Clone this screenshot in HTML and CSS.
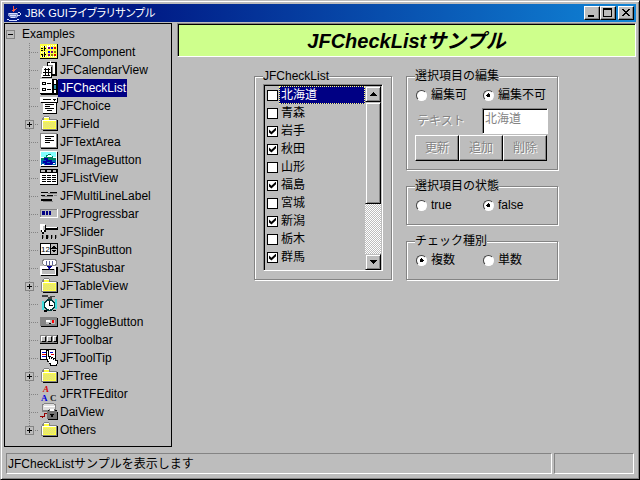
FILE: index.html
```
<!DOCTYPE html>
<html lang="ja">
<head>
  <meta charset="UTF-8" />
  <meta name="viewport" content="width=device-width, initial-scale=1" />
  <title>JBK GUIライブラリサンプル</title>
  <link rel="stylesheet" href="styles.css">
</head>
<body>
<svg class="sprite" aria-hidden="true">
  <symbol id="folder" viewBox="0 0 18 18">
    <path d="M3 16h15V5h-1v10H3z" fill="#000"/>
    <path d="M1 5h1V3h1V2h1V1h5v1h1v2h7v11H1z" fill="#848484"/>
    <path d="M2 5h2V3h5v2h7v9H2z" fill="#ffff42"/>
    <path d="M2 5.500h14M2.500 5v9M4 2.500h5" fill="none" stroke="#fff"/>
    <path d="M4 7.500h12M4 9.500h12M4 11.500h12" stroke="#d6d694" stroke-dasharray="1 1"/>
    <path d="M3 8.500h12M3 10.500h12M3 12.500h12" stroke="#d6d694" stroke-dasharray="1 1"/>
  </symbol>
</svg>
<div class="window">
  <header class="titlebar">
    <svg class="java" viewBox="0 0 16 16" aria-hidden="true">
      <path d="M7 7C4 5 9 4 7 0c4 3-1 4 1 7M9 7c-2-2 2-2 2-4-3 1-4 2-2 4" fill="#f75a42"/>
      <path d="M2 8h10v1c0 3-1 4-3 4H5c-2 0-3-2-3-5z" fill="#8494ce"/>
      <path d="M3 8h8M4 10h6M5 12h4M1 14c3 2 9 2 12 0M12 8c4-1 3 3-1 3" fill="none" stroke="#d6deff"/>
    </svg>
    <h1>JBK GUIライブラリサンプル</h1>
    <div class="controls">
      <button type="button" aria-label="最小化"><svg viewBox="0 0 12 10"><path d="M2 8h6" stroke="#000" stroke-width="2"/></svg></button>
      <button type="button" aria-label="最大化"><svg viewBox="0 0 12 10"><path d="M1.500 1v7.500h8V1M1 1h9" fill="none" stroke="#000"/><path d="M1 1h9" stroke="#000" stroke-width="2"/></svg></button>
      <button type="button" class="close" aria-label="閉じる"><svg viewBox="0 0 12 10"><path d="M2 1h2v1h1v1h2V2h1V1h2v1H9v1H8v1H7v1h1v1h1v1h1v1H8V7H7V6H5v1H4v1H2V7h1V6h1V5h1V4H4V3H3V2H2z"/></svg></button>
    </div>
  </header>

  <div class="workspace">
    <nav class="tree" aria-label="Examples">
      <div class="root"><button type="button" class="toggle" aria-label="折りたたむ"></button><a href="#">Examples</a></div>
      <ul>
        <li><span class="joint"></span><svg viewBox="0 0 18 18"><path d="M0 1h18v15H0z"/><path d="M0 1h17v14H0z" fill="#ffff42"/><path d="M1 3.500h5M1 9.500h5M1 13.500h5M7 2.500h10M7 13.500h10" stroke="#fff" stroke-dasharray="1 1"/><path d="M1 5.500h5M1 7.500h4M1 11.500h5M4.500 3v11M2.500 12v2" stroke="#000" stroke-dasharray="2 1"/><path d="M7 3h3v3H7z" fill="#fff"/><path d="M8 4h2v2H8zM11 8h2v2h-2zM8 11h2v2H8z" fill="#7b0084"/><path d="M11 4h2v2h-2zM8 8h2v2H8z" fill="#0000ff"/><path d="M14 4h2v2h-2zM14 11h2v2h-2z" fill="#e70000"/><path d="M14 8h2v2h-2zM11 11h2v2h-2z" fill="#848400"/></svg><a href="#">JFComponent</a></li>
        <li><span class="joint"></span><svg viewBox="0 0 18 18"><path d="M7 1h10v14H7z"/><path d="M10 0h1v3h-1z" fill="#fff"/><path d="M8 3h7v10H8z" fill="#848484"/><path d="M8 2h7v2H8zM13 4h2v9h-2z" fill="#fff"/><path d="M3 6h9v11H2z"/><path d="M3 5h8v11H1l1-6z" fill="#fff"/><path d="M4 8.500h6M3 11.500h8M3 14.500h7M5.500 7v8M8.500 7v8" stroke="#000"/></svg><a href="#">JFCalendarView</a></li>
        <li class="selected"><span class="joint"></span><svg viewBox="0 0 18 18"><path d="M1 1h17v15H1z"/><path d="M0 0h17v15H0z"/><path d="M0 0h12v14H0z" fill="#fff"/><path d="M2.500 3.500h3v2h-3zM2.500 9.500h3v2h-3z" fill="none" stroke="#000"/><path d="M7 4.500h4M7 10.500h4" stroke="#000"/><path d="M14 1h2v4h-2zM14 11h2v3h-2z" fill="#fff"/><path d="M14 6h2v4h-2z" fill="#3194a5"/></svg><a href="#">JFCheckList</a></li>
        <li><span class="joint"></span><svg viewBox="0 0 18 18"><path d="M1 1h17v5h-1v11H3V6H1z"/><path d="M0 0h17v5H0zM3 6h13v10H3z" fill="#fff"/><path d="M3 2.500h8M5 7.500h9M5 9.500h5M5 11.500h9M7 13.500h5M13 2.500h3M14 3.500h1" stroke="#000"/></svg><a href="#">JFChoice</a></li>
        <li><span class="joint"><button type="button" class="toggle" aria-label="展開"></button></span><svg><use href="#folder"/></svg><a href="#">JFField</a></li>
        <li><span class="joint"></span><svg viewBox="0 0 18 18"><path d="M1 1h17v15H1z"/><path d="M0 0h17v15H0z" fill="#848484"/><path d="M1 1h15v13H1z" fill="#fff"/><path d="M5 3.500h9M5 5.500h6M5 7.500h9M5 9.500h5" stroke="#000"/></svg><a href="#">JFTextArea</a></li>
        <li><span class="joint"></span><svg viewBox="0 0 18 18"><path d="M1 1h17v15H1z"/><path d="M0 0h17v15H0z" fill="#fff"/><path d="M1 1h15v5H1z" fill="#84ffff"/><path d="M1 7h3V6h2V4h2V3h3v2h2v2h3v3H1z" fill="#008463"/><path d="M1 9h15v5H1z" fill="#006bb5"/><path d="M4 8h3v2h4v2h4M3 11h3v2h6" stroke="#0000a5" stroke-width="2" fill="none"/><path d="M8 4h3v1h1v1H7V5h1zM2 13h2v1H2zM13 12h2v1h-2z" fill="#fff"/></svg><a href="#">JFImageButton</a></li>
        <li><span class="joint"></span><svg viewBox="0 0 18 18"><path d="M0 0h18v16H0z"/><path d="M1 1h4v2H1zM7 1h4v2H7zM13 1h3v2h-3z" fill="#bdbdbd"/><path d="M0 4h17v11H0z" fill="#fff"/><path d="M2 6.500h14M2 8.500h14M2 10.500h14M2 12.500h14" stroke="#000" stroke-dasharray="4 1"/></svg><a href="#">JFListView</a></li>
        <li><span class="joint"></span><svg viewBox="0 0 18 18"><path d="M1 5h7v1H1zM10 5h7v1h-7zM1 8h4v1H1zM7 8h6v1H7zM1 12h11v2H1z"/><path d="M8 6h9v1H8zM2 9h11v1H2zM14 8h3v1h-3zM3 14h10v1H3z" fill="#848484"/></svg><a href="#">JFMultiLineLabel</a></li>
        <li><span class="joint"></span><svg viewBox="0 0 18 18"><path d="M0 4h18v9H0z" fill="#fff"/><path d="M0 4h17v8H0z" fill="#848484"/><path d="M1 5h16v7H1z" fill="#bdbdbd"/><path d="M2 6h3v4H2zM6 6h2v4H6zM9 6h2v4H9z" fill="#000084"/></svg><a href="#">JFProgressbar</a></li>
        <li><span class="joint"></span><svg viewBox="0 0 18 18"><path d="M6 4h12v3H6z"/><path d="M6 4h11v1H6z" fill="#fff"/><path d="M1 2h5v7H4v2H2V9H1z"/><path d="M0 1h5v6H4v2H2V7H0z" fill="#fff"/><path d="M3 3h2v4H3z" fill="#bdbdbd"/><path d="M2 12h1v4H2zM6 12h2v4H6zM11 12h1v4h-1zM15 12h1v4h-1z"/><path d="M3 12h1v3H3zM8 12h1v3H8zM12 12h1v3h-1zM16 12h1v3h-1z" fill="#848484"/></svg><a href="#">JFSlider</a></li>
        <li><span class="joint"></span><svg viewBox="0 0 18 18"><path d="M0 2h18v12H0z"/><path d="M1 3h9v10H1z" fill="#fff"/><path d="M11 3h6v4h-6zM11 8h6v5h-6z" fill="#bdbdbd"/><path d="M12 6h4v1h-4zM13 5h2v1h-2zM12 9h4v1h-4zM13 10h2v1h-2z"/><text x="1" y="11" font-size="8">12</text></svg><a href="#">JFSpinButton</a></li>
        <li><span class="joint"></span><svg viewBox="0 0 18 18"><path d="M1 8h17v9H1z"/><path d="M0 7h16v9H0z" fill="#fff"/><path d="M2 10h13v5H2z" fill="#bdbdbd"/><path d="M2 10h12v1H2z"/><path d="M3 0h12l2 2v3l-2 2h-3l-3 4-2-4H4L2 5V2z" fill="#848484"/><path d="M4 1h10l2 2v1l-2 2H4L3 5V2z" fill="#fff"/><path d="M6.500 2v4M9.500 2v4M12.500 2v4" stroke="#5a6394"/><path d="M7 7h5v1h-1v1h-1v2H9V9H8V8H7z" fill="#000094"/></svg><a href="#">JFStatusbar</a></li>
        <li><span class="joint"><button type="button" class="toggle" aria-label="展開"></button></span><svg><use href="#folder"/></svg><a href="#">JFTableView</a></li>
        <li><span class="joint"></span><svg viewBox="0 0 18 18"><path d="M2 0h6v2h2V1h5v1h-3v2H8V2H2z" fill="#424242"/><path d="M2 6h2v9H2zM15 4h2v10h-2z" fill="#42dede"/><circle cx="9.500" cy="10" r="6" fill="#003939"/><circle cx="9.500" cy="10" r="4.500" fill="#fff"/><path d="M9 6h1v4h3v1H9zM4 15h3v2H4zM13 15h3v1h-3z"/></svg><a href="#">JFTimer</a></li>
        <li><span class="joint"></span><svg viewBox="0 0 18 18"><path d="M1 5h17v9H1z"/><path d="M0 4h17v9H0z" fill="#848484"/><path d="M6 7h9v4H6z" fill="#bdbdbd"/><path d="M6 7h4v2H6z" fill="#fff"/><path d="M12 7h2v3h-2z" fill="#ff0000"/><path d="M9 10h2v1H9z"/></svg><a href="#">JFToggleButton</a></li>
        <li><span class="joint"></span><svg viewBox="0 0 18 18"><path d="M0 4h18v9H0z"/><path d="M0 4h17v8H0z" fill="#848484"/><path d="M1 5h4v5H1zM7 5h4v5H7zM13 5h3v5h-3z" fill="#fff"/><path d="M2 6h4v5H2zM8 6h4v5H8zM14 6h3v5h-3z"/><path d="M2 6h3v4H2zM8 6h3v4H8zM14 6h2v4h-2z" fill="#bdbdbd"/></svg><a href="#">JFToolbar</a></li>
        <li><span class="joint"></span><svg viewBox="0 0 18 18"><path d="M0 0h16v11H0z"/><path d="M1 1h14v9H1z" fill="#fff"/><path d="M2 3.500h4M10 3.500h3M2 7.500h4" stroke="#0000c6"/><path d="M2 5.500h4M11 5.500h3" stroke="#e70000"/><path d="M6 1h3v6h2v1h2v1h3v2h2v4h-1v2h-7v-2H9v-2H7v-2H6z"/><path d="M7 2h1v6h1v2h1V8h1v2h1V9h1v2h1v-1h1v2h2v3h-1v1h-5v-2h-2v-2H8v-2H7z" fill="#fff"/></svg><a href="#">JFToolTip</a></li>
        <li><span class="joint"><button type="button" class="toggle" aria-label="展開"></button></span><svg><use href="#folder"/></svg><a href="#">JFTree</a></li>
        <li><span class="joint"></span><svg class="letters" viewBox="0 0 18 18"><text x="3" y="7" fill="#d60000" font-style="italic">A</text><text x="1" y="16" fill="#0000de">A</text><text x="10" y="16" fill="#212121">C</text></svg><a href="#">JFRTFEditor</a></li>
        <li><span class="joint"></span><svg viewBox="0 0 18 18"><path d="M2 1h2V0h10v1h2v8H2z" fill="#848484"/><path d="M4 1h10v1h1v5H3V2h1z" fill="#dedede"/><path d="M4 3.500h11" stroke="#fff"/><path d="M8 7h9v2h1v8H8z"/><path d="M7 8h2V6h6v2h2v8H7z" fill="#737373"/><path d="M10 6h4v2h-4z" fill="#fff"/><path d="M10 11h4v1h-1v2h-2v-2h-1z"/><path d="M0 13h4v-3h3v1H5v3H3v1H2v-1H0z" fill="#940000"/></svg><a href="#">DaiView</a></li>
        <li><span class="joint"><button type="button" class="toggle" aria-label="展開"></button></span><svg><use href="#folder"/></svg><a href="#">Others</a></li>
      </ul>
    </nav>

    <main>
      <h2 class="banner">JFCheckListサンプル</h2>
      <div class="demo">
        <fieldset class="group">
          <legend>JFCheckList</legend>
          <div class="listbox">
            <ul class="items">
              <li class="selected"><input type="checkbox" id="p1"><label for="p1">北海道</label></li>
              <li><input type="checkbox" id="p2"><label for="p2">青森</label></li>
              <li><input type="checkbox" id="p3" checked><label for="p3">岩手</label></li>
              <li><input type="checkbox" id="p4" checked><label for="p4">秋田</label></li>
              <li><input type="checkbox" id="p5"><label for="p5">山形</label></li>
              <li><input type="checkbox" id="p6" checked><label for="p6">福島</label></li>
              <li><input type="checkbox" id="p7"><label for="p7">宮城</label></li>
              <li><input type="checkbox" id="p8" checked><label for="p8">新潟</label></li>
              <li><input type="checkbox" id="p9"><label for="p9">栃木</label></li>
              <li><input type="checkbox" id="p10" checked><label for="p10">群馬</label></li>
            </ul>
            <div class="scrollbar">
              <button type="button" aria-label="上へ"><svg viewBox="0 0 7 4"><path d="M3 0h1v1h1v1h1v1h1v1H0V3h1V2h1V1h1z"/></svg></button>
              <div class="thumb"></div>
              <div class="track"></div>
              <button type="button" aria-label="下へ"><svg viewBox="0 0 7 4"><path d="M0 0h7v1H6v1H5v1H4v1H3V3H2V2H1V1H0z"/></svg></button>
            </div>
          </div>
        </fieldset>

        <div class="options">
          <fieldset class="group">
            <legend>選択項目の編集</legend>
            <div class="pair">
              <label><input type="radio" name="edit">編集可</label>
              <label><input type="radio" name="edit" checked>編集不可</label>
            </div>
            <div class="pair field">
              <label class="disabled" for="item-text">テキスト</label>
              <input type="text" id="item-text" value="北海道" disabled>
            </div>
            <div class="buttons">
              <button type="button" disabled>更新</button>
              <button type="button" disabled>追加</button>
              <button type="button" disabled>削除</button>
            </div>
          </fieldset>
          <fieldset class="group">
            <legend>選択項目の状態</legend>
            <div class="pair">
              <label><input type="radio" name="state">true</label>
              <label><input type="radio" name="state" checked>false</label>
            </div>
          </fieldset>
          <fieldset class="group">
            <legend>チェック種別</legend>
            <div class="pair">
              <label><input type="radio" name="kind" checked>複数</label>
              <label><input type="radio" name="kind">単数</label>
            </div>
          </fieldset>
        </div>
      </div>
    </main>
  </div>

  <footer class="statusbar">
    <p>JFCheckListサンプルを表示します</p>
    <p class="side"></p>
  </footer>
</div>
</body>
</html>
```
FILE: styles.css
```
* {
  box-sizing: border-box;
}
body {
  margin: 0;
  font-family: "Liberation Sans", "Noto Sans CJK JP", sans-serif;
  font-size: 12px;
  line-height: 18px;
  color: #000;
  background: #bdbdbd;
}
button, input {
  font: inherit;
  margin: 0;
  padding: 0;
  border-radius: 0;
}
ul {
  list-style: none;
  margin: 0;
  padding: 0;
}
svg {
  shape-rendering: crispEdges;
}
.sprite {
  display: none;
}
.window {
  display: flex;
  flex-direction: column;
  min-height: 100vh;
  padding: 2px;
  border: 1px solid;
  border-color: #bdbdbd #000 #000 #bdbdbd;
  box-shadow: inset 1px 1px 0 #fff, inset -1px -1px 0 #848484;
}

/* title bar */
.titlebar {
  display: flex;
  align-items: center;
  height: 18px;
  margin: 1px 1px 1px;
  padding: 0 2px;
  gap: 3px;
  color: #fff;
  background: linear-gradient(90deg, #001884 20%, #1084d6);
}
.java {
  width: 16px;
  height: 16px;
}
.titlebar h1 {
  flex: 1;
  margin: 0;
  font-size: 11px;
  font-weight: normal;
  font-feature-settings: "palt";
}
.controls {
  display: flex;
}
.controls button {
  width: 16px;
  height: 14px;
  display: flex;
  background: #bdbdbd;
  border: 1px solid;
  border-color: #fff #000 #000 #fff;
  box-shadow: inset -1px -1px 0 #848484;
}
.controls svg {
  width: 12px;
  height: 10px;
  margin: 1px;
}
.controls .close {
  margin-left: 2px;
}

/* tree */
.workspace {
  flex: 1;
  display: flex;
  gap: 5px;
  padding: 0 1px;
}
.tree {
  flex: 0 0 168px;
  padding: 1px;
  border: 1px solid #000;
}
.tree a {
  color: #000;
  text-decoration: none;
  padding: 0 1px 0 2px;
}
.root {
  display: flex;
  align-items: center;
  height: 18px;
  gap: 5px;
}
.toggle {
  width: 9px;
  height: 9px;
  display: block;
  border: 1px solid #848484;
  background: linear-gradient(#000, #000) center / 5px 1px no-repeat #bdbdbd;
}
li .toggle {
  background: linear-gradient(#000, #000) center / 5px 1px no-repeat,
    linear-gradient(#000, #000) center / 1px 5px no-repeat #bdbdbd;
}
.tree ul {
  padding-left: 19px;
}
.tree li {
  display: flex;
  align-items: center;
  height: 18px;
}
.joint {
  flex: 0 0 15px;
  height: 18px;
  display: flex;
  align-items: center;
  background:
    repeating-linear-gradient(#848484 0 1px, transparent 1px 2px) 4px 0 / 1px 100% no-repeat,
    repeating-linear-gradient(90deg, #848484 0 1px, transparent 1px 2px) 4px 9px / 10px 1px no-repeat;
}
.tree li:last-child .joint {
  background-size: 1px 9px, 10px 1px;
}
.tree li svg {
  flex: none;
  width: 18px;
  height: 18px;
}
.letters text {
  font-family: "Liberation Serif", serif;
  font-size: 9px;
  font-weight: bold;
}
.tree .selected a {
  color: #fff;
  background: #000084;
}

/* content */
main {
  flex: 1;
}
.banner {
  margin: 0;
  height: 34px;
  font-size: 20px;
  line-height: 34px;
  font-style: italic;
  text-align: center;
  background: #ceff8c;
  border: 1px solid;
  border-color: #848484 #fff #fff #848484;
  box-shadow: inset 1px 1px 0 #000;
}
.demo {
  display: flex;
  justify-content: center;
  gap: 14px;
  padding: 12px 1px 0 0;
}
.group {
  min-width: 0;
  margin: 0;
  padding: 1px 8px 8px;
  border: 1px solid #848484;
  box-shadow: 1px 1px 0 #fff, inset 1px 1px 0 #fff;
}
.group legend {
  padding: 0;
  line-height: 14px;
  background: #bdbdbd;
}
.listbox {
  display: flex;
  width: 120px;
  height: 187px;
  border: 1px solid;
  border-color: #848484 #fff #fff #848484;
  box-shadow: inset 1px 1px 0 #000;
  padding: 1px 1px 0 1px;
}
.items {
  flex: 1;
}
.items li {
  display: flex;
  align-items: center;
  gap: 1px;
  padding-left: 2px;
}
.items label {
  flex: 1;
  height: 18px;
  line-height: 16px;
  padding-left: 1px;
  border: 1px solid transparent;
}
.items .selected label {
  color: #fff;
  background: #000084;
  border: 1px dotted #ffff7b;
}
input[type="checkbox"] {
  appearance: none;
  width: 11px;
  height: 11px;
  background: #fff;
  border: 1px solid #000;
}
input[type="checkbox"]:checked::before {
  content: "";
  display: block;
  width: 7px;
  height: 7px;
  margin: 1px;
  background: #000;
  clip-path: polygon(0 30%, 35% 60%, 100% 0, 100% 40%, 35% 100%, 0 70%);
}
.scrollbar {
  flex: 0 0 16px;
  display: flex;
  flex-direction: column;
}
.scrollbar button, .thumb {
  background: #bdbdbd;
  border: 1px solid;
  border-color: #bdbdbd #000 #000 #bdbdbd;
  box-shadow: inset 1px 1px 0 #fff, inset -1px -1px 0 #848484;
}
.scrollbar button {
  height: 16px;
  display: flex;
  align-items: center;
  justify-content: center;
}
.scrollbar svg {
  width: 7px;
  height: 4px;
}
.thumb {
  flex: 2;
}
.track {
  flex: 1;
  background: repeating-conic-gradient(#fff 0 25%, #bdbdbd 0 50%) 0 0 / 2px 2px;
}
.options {
  width: 152px;
  display: flex;
  flex-direction: column;
  justify-content: space-between;
}
.options .group {
  padding-top: 3px;
}
.options .group:not(:first-child) {
  padding-bottom: 10px;
}
.pair {
  display: grid;
  grid-template-columns: 67px 1fr;
  align-items: center;
}
.pair label {
  display: flex;
  align-items: center;
  gap: 4px;
  padding-left: 1px;
}
input[type="radio"] {
  appearance: none;
  width: 11px;
  height: 11px;
  border: 1px solid;
  border-color: #424242 #fff #fff #424242;
  border-radius: 50%;
  background: #fff;
}
input[type="radio"]:checked {
  background: radial-gradient(circle, #000 2px, #fff 2px);
}
.field {
  margin: 4px 0 1px;
}
.pair .disabled {
  padding-left: 2px;
}
.disabled, .buttons button {
  color: #848484;
  text-shadow: 1px 1px 0 #fff;
}
input[type="text"] {
  width: 66px;
  height: 26px;
  padding: 0 2px 8px;
  line-height: 16px;
  color: #848484;
  background: #fff;
  border: 1px solid;
  border-color: #848484 #fff #fff #848484;
  box-shadow: inset 1px 1px 0 #000;
}
.buttons {
  display: grid;
  grid-template-columns: repeat(3, 44px);
}
.buttons button {
  height: 26px;
  background: #bdbdbd;
  border: 1px solid;
  border-color: #fff #000 #000 #fff;
  box-shadow: inset -1px -1px 0 #848484;
}

/* status bar */
.statusbar {
  display: flex;
  gap: 2px;
  padding: 6px 3px 3px;
}
.statusbar p {
  flex: 1;
  height: 21px;
  margin: 0;
  padding-left: 1px;
  line-height: 21px;
  border: 1px solid;
  border-color: #848484 #fff #fff #848484;
}
.statusbar .side {
  flex: 0 0 80px;
}
```
